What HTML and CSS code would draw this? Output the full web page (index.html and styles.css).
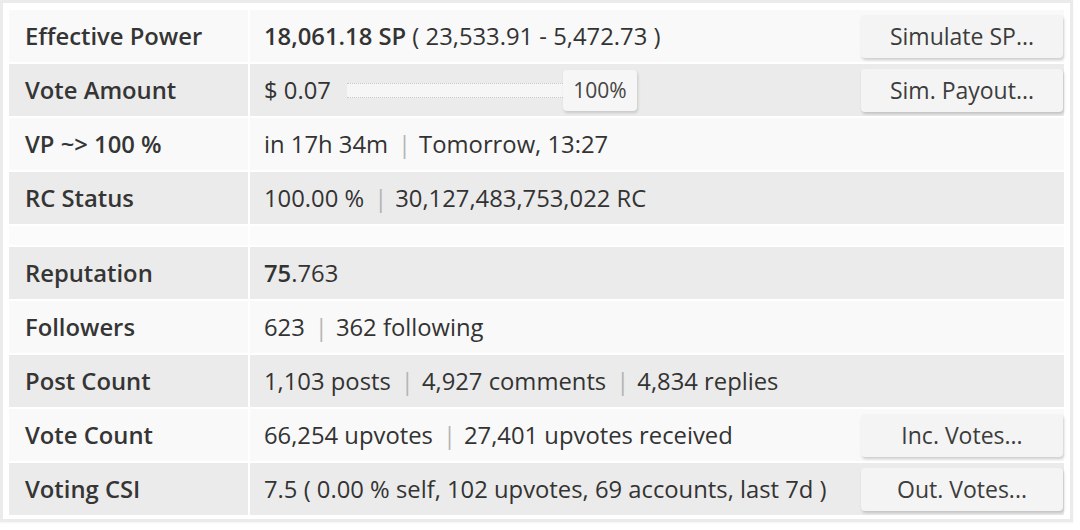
FILE: index.html
```
<!DOCTYPE html>
<html>
<head>
<meta charset="utf-8">
<link rel="stylesheet" href="styles.css">
</head>
<body>
<div class="card">
  <div class="grid">
    <div class="lbl odd">Effective Power</div>
    <div class="val odd"><span><b>18,061.18 SP</b> ( 23,533.91 - 5,472.73 )</span><button class="btn">Simulate SP...</button></div>

    <div class="lbl even">Vote Amount</div>
    <div class="val even"><span class="amt">$ 0.07</span><span class="slider"><span class="track"></span><span class="thumb">100%</span></span><button class="btn">Sim. Payout...</button></div>

    <div class="lbl odd">VP ~&gt; 100 %</div>
    <div class="val odd"><span>in 17h 34m<span class="sep">|</span>Tomorrow, 13:27</span></div>

    <div class="lbl even">RC Status</div>
    <div class="val even"><span>100.00 %<span class="sep">|</span>30,127,483,753,022 RC</span></div>

    <div class="spacer"></div>
    <div class="spacer"></div>

    <div class="lbl even">Reputation</div>
    <div class="val even"><span><b>75</b>.763</span></div>

    <div class="lbl odd">Followers</div>
    <div class="val odd"><span>623<span class="sep">|</span>362 following</span></div>

    <div class="lbl even">Post Count</div>
    <div class="val even"><span>1,103 posts<span class="sep">|</span>4,927 comments<span class="sep">|</span>4,834 replies</span></div>

    <div class="lbl odd">Vote Count</div>
    <div class="val odd"><span>66,254 upvotes<span class="sep">|</span>27,401 upvotes received</span><button class="btn">Inc. Votes...</button></div>

    <div class="lbl even">Voting CSI</div>
    <div class="val even"><span>7.5 ( 0.00 % self, 102 upvotes, 69 accounts, last 7d )</span><button class="btn">Out. Votes...</button></div>
  </div>
</div>
</body>
</html>
```
FILE: styles.css
```
html, body {
  margin: 0;
  padding: 0;
  background: #ffffff;
}
body {
  font-family: "Open Sans", "Noto Sans", sans-serif;
  font-size: 23.8px;
  color: #333333;
  width: 1080px;
  height: 530px;
  overflow: hidden;
}
.card {
  padding: 7px 6px 4px 6px;
  border: 3px solid #ebebeb;
  box-sizing: border-box;
  width: 1073px;
  box-shadow: 0 1px 2px rgba(0,0,0,0.05);
  background: #fff;
}
.grid {
  display: grid;
  grid-template-columns: 239px 1fr;
  grid-template-rows: repeat(4, 52px) 19px repeat(5, 52px);
  gap: 2px;
}
.lbl {
  font-weight: 600;
  padding-left: 16px;
  display: flex;
  align-items: center;
  color: #353535;
}
.val {
  padding-left: 14px;
  display: flex;
  align-items: center;
  white-space: nowrap;
}
.odd { background: #f9f9f9; }
.even { background: #ebebeb; }
.spacer { background: #fbfbfb; }
b { font-weight: 600; }
.sep {
  color: #b4b4b4;
  margin: 0 8px 0 10px;
}
.btn {
  margin-left: auto;
  margin-right: 1px;
  flex: none;
  width: 202px;
  height: 43px;
  border: none;
  border-radius: 4px;
  background: #f4f4f4;
  box-shadow: 1px 2px 3px rgba(0,0,0,0.18);
  font-family: "Open Sans", "Noto Sans", sans-serif;
  font-size: 23px;
  color: #3c3c3c;
  padding: 0;
}
.slider {
  display: flex;
  align-items: center;
  margin-left: 16px;
  height: 41px;
}
.track {
  width: 216px;
  height: 13px;
  border-top: 1px dotted #c8c8c8;
  border-bottom: 1px dotted #c8c8c8;
  background: #f6f6f6;
}
.thumb {
  width: 74px;
  height: 41px;
  display: flex;
  align-items: center;
  justify-content: center;
  background: #f6f6f6;
  border-radius: 4px;
  box-shadow: 1px 2px 3px rgba(0,0,0,0.15);
  font-size: 21px;
  color: #444;
}
```
